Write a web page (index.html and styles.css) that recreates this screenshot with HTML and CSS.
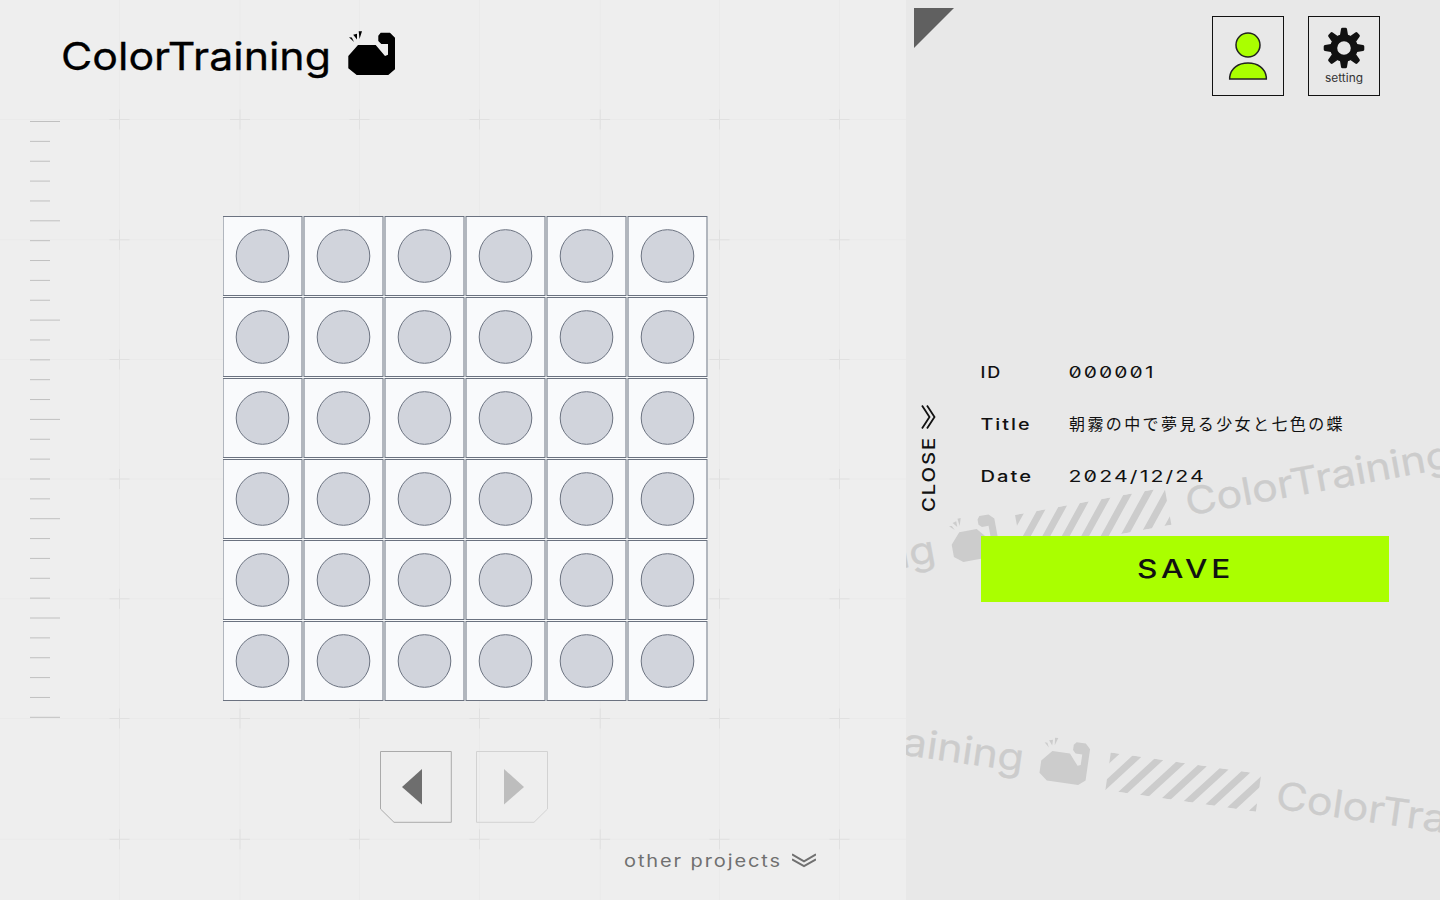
FILE: index.html
```html
<!DOCTYPE html>
<html lang="ja">
<head>
<meta charset="utf-8">
<title>ColorTraining</title>
<link rel="stylesheet" href="styles.css">
</head>
<body>
<svg class="defs" width="0" height="0">
  <defs>
    <g id="logo">
      <text class="logo-text" x="-1" y="0" textLength="270" lengthAdjust="spacingAndGlyphs">ColorTraining</text>
      <g transform="translate(278 -50)">
        <path d="M8.300 36V48.300L16.700 55H48.300L55 49.300V17.700L50 12.700H40.700L38.300 15.700V21L41.300 24H48V34.700L45 36L35.700 25H18Z"/>
        <path d="M9 17.300L14 22L11.800 17.500ZM13.200 14.700L17 19.500V13.700ZM18.700 11.300H22L19.500 19Z"/>
      </g>
    </g>
    <clipPath id="tape-clip"><rect width="152" height="38"/></clipPath>
    <g id="tape" clip-path="url(#tape-clip)">
      <path d="M0 0h9l-31 38h-9zM22 0h9l-31 38h-9zM44 0h9l-31 38h-9zM66 0h9l-31 38h-9zM88 0h9l-31 38h-9zM110 0h9l-31 38h-9zM132 0h9l-31 38h-9zM154 0h9l-31 38h-9zM176 0h9l-31 38h-9z"/>
    </g>
    <g id="ribbon">
      <use href="#logo" x="-525"/>
      <use href="#tape" x="-171" y="-32"/>
      <use href="#logo"/>
    </g>
  </defs>
</svg>
<div class="page">
  <main class="work">
    <svg class="backdrop" id="backdrop" width="906" height="900"></svg>
    <header class="brand">
      <svg width="350" height="64" viewBox="-2 -50 350 64"><use href="#logo"/></svg>
    </header>
    <section class="stage">
      <svg class="board" id="board" width="485" height="485"></svg>
    </section>
    <nav class="pager">
      <svg width="72" height="72"><path class="frame" d="M.5.500H71.300V71.300H14L.5 58Z"/><path class="arrow" d="M22 36L42 18V53.500Z"/></svg>
      <svg class="off" width="72" height="72"><path class="frame" d="M.5.500H71.500V58L58 71.300H.5Z"/><path class="arrow" d="M48 36L28 18V53.500Z"/></svg>
    </nav>
    <footer class="more">
      <svg width="158" height="26"><text class="t more-text" x="0" y="17" textLength="158" lengthAdjust="spacingAndGlyphs">other projects</text></svg>
      <svg class="more-icon" width="24" height="16"><path d="M0 1.300L12 8.300L24 1.300M0 6.300L12 13L24 6.300"/></svg>
    </footer>
  </main>
  <aside class="panel">
    <svg class="ribbons" width="534" height="900">
      <use href="#ribbon" transform="translate(283 515.500) rotate(-10.400)"/>
      <use href="#ribbon" transform="translate(369.500 808.500) rotate(8.200)"/>
    </svg>
    <div class="top">
      <svg class="corner" width="40" height="40"><path d="M0 0H40L0 40Z"/></svg>
      <div class="tools">
        <button class="tool"><svg width="40" height="52"><ellipse cx="20" cy="15" rx="12" ry="12"/><path d="M1.700 49V47C3 38 10.500 33 20 33S37 38 38.300 47V49Z"/></svg></button>
        <button class="tool gear">
          <svg width="42" height="42" viewBox="-21 -21 42 42">
            <defs><path id="tooth" d="M-4-13L-3-19Q-2.800-20.300-1.500-20.300H1.500Q2.800-20.300 3-19L4-13Z"/></defs>
            <circle r="10.300"/>
            <g><use href="#tooth"/><use href="#tooth" transform="rotate(45)"/><use href="#tooth" transform="rotate(90)"/><use href="#tooth" transform="rotate(135)"/><use href="#tooth" transform="rotate(180)"/><use href="#tooth" transform="rotate(225)"/><use href="#tooth" transform="rotate(270)"/><use href="#tooth" transform="rotate(315)"/></g>
          </svg>
          <svg width="42" height="22"><text class="t small" x="2" y="13" textLength="38" lengthAdjust="spacingAndGlyphs">setting</text></svg>
        </button>
      </div>
    </div>
    <div class="body">
      <div class="close">
        <svg width="16" height="24"><path class="close-icon" d="M1 .5L8.500 12L1 23.500M6 .5L13.500 12L6 23.500"/></svg>
        <svg class="close-label" width="24" height="82"><text class="t close-text" transform="translate(14 78) rotate(-90)" textLength="76" lengthAdjust="spacingAndGlyphs">CLOSE</text></svg>
      </div>
      <div class="details">
        <dl class="info">
          <dt><svg width="60" height="24"><text class="t label" x="-.5" y="18" textLength="21.500" lengthAdjust="spacingAndGlyphs">ID</text></svg></dt>
          <dd><svg width="100" height="24"><text class="t" x="-.5" y="18" textLength="87" lengthAdjust="spacingAndGlyphs">000001</text></svg></dd>
          <dt><svg width="60" height="24"><text class="t label" x="-.5" y="18" textLength="51" lengthAdjust="spacingAndGlyphs">Title</text></svg></dt>
          <dd class="jp">朝霧の中で夢見る少女と七色の蝶</dd>
          <dt><svg width="60" height="24"><text class="t label" x="-.5" y="18" textLength="52.500" lengthAdjust="spacingAndGlyphs">Date</text></svg></dt>
          <dd><svg width="150" height="24"><text class="t" x="-.5" y="18" textLength="137.500" lengthAdjust="spacingAndGlyphs">2024/12/24</text></svg></dd>
        </dl>
        <button class="save"><svg width="98" height="34"><text class="t save-text" x="1" y="26" textLength="97" lengthAdjust="spacingAndGlyphs">SAVE</text></svg></button>
      </div>
    </div>
  </aside>
</div>
<script src="script.js"></script>
</body>
</html>
```
FILE: styles.css
```css
* { box-sizing: border-box; }
body { margin: 0; background: #eee; font-family: Inter, "Noto Sans CJK JP", sans-serif; overflow: hidden; }
svg { display: block; flex: none; }
button { margin: 0; padding: 0; font: inherit; }
.defs { position: absolute; }
.page { display: flex; width: 1440px; height: 900px; }
.work { position: relative; width: 906px; display: flex; flex-direction: column; background: #eee; }
.backdrop { position: absolute; left: 0; top: 0; }
.backdrop .line { stroke: #eaeaea; }
.backdrop .cross { stroke: #e0e0e0; }
.backdrop .tick { stroke: #c0c0c0; }
.brand { position: relative; height: 216px; padding: 20px 0 0 60px; }
.logo-text { font: 400 38px Inter, sans-serif; stroke: currentColor; stroke-width: .3; }
.stage { position: relative; padding-left: 223px; height: 535px; }
.board { background: #f9fafb; overflow: hidden; }
.board rect { fill: #f9fafc; stroke: #6b7280; }
.board circle { fill: #d1d4dc; stroke: #6b7280; }
.pager { position: relative; display: flex; gap: 24px; padding-left: 380px; height: 99px; }
.frame { fill: none; stroke: #aaa; }
.arrow { fill: #6e6e6e; }
.off .frame { stroke: #d2d2d2; }
.off .arrow { fill: #bdbdbd; }
.more { position: relative; display: flex; gap: 10px; padding-left: 624px; }
.more-icon { margin-top: 3px; fill: none; stroke: #707070; stroke-width: 2; }
.t { font-family: Inter, sans-serif; font-size: 16px; letter-spacing: 1.6px; font-feature-settings: "zero"; fill: #111; }
.label { font-weight: 500; }
.more-text { fill: #707070; font-size: 17px; }
.small { font-size: 11px; letter-spacing: 0; }
.close-label { overflow: visible; }
.close-text { font-size: 17px; font-weight: 500; }
.save-text { font-size: 25px; letter-spacing: 3px; font-weight: 500; }
.panel { position: relative; width: 534px; background: #e8e8e8; overflow: hidden; }
.ribbons { position: absolute; left: 0; top: 0; fill: #ccc; color: #ccc; }
.top { position: relative; display: flex; justify-content: space-between; padding: 8px 60px 0 8px; height: 364px; }
.corner { fill: #606060; }
.tools { display: flex; gap: 24px; padding-top: 8px; }
.tool { width: 72px; height: 80px; border: 1px solid #111; background: transparent; display: flex; flex-direction: column; align-items: center; justify-content: center; }
.tool svg { fill: #af0; stroke: #222; stroke-width: 1.5; }
.gear { justify-content: flex-start; padding-top: 10px; }
.gear svg { fill: #111; stroke: none; }
.gear circle { fill: none; stroke: #111; stroke-width: 7; }
.gear .small { fill: #333; }
.body { position: relative; display: flex; padding-left: 15px; }
.close { display: flex; flex-direction: column; gap: 5px; width: 60px; padding-top: 41px; }
.close-icon { fill: none; stroke: #111; stroke-width: 1.8; }
.details { width: 408px; }
.info { display: grid; grid-template-columns: 88px 1fr; row-gap: 28px; margin: -4px 0 48px; }
.info dt, .info dd { margin: 0; height: 24px; }
.jp { font-family: "Noto Sans CJK JP", sans-serif; font-size: 16px; line-height: 22px; letter-spacing: 2.4px; color: #111; white-space: nowrap; }
.save { display: flex; align-items: center; justify-content: center; width: 408px; height: 66px; border: 0; background: #af0; }
```
FILE: script.js
```js
const NS = 'http://www.w3.org/2000/svg';
function add(parent, name, attrs) {
  const el = document.createElementNS(NS, name);
  for (const key in attrs) el.setAttribute(key, attrs[key]);
  parent.appendChild(el);
}

const backdrop = document.getElementById('backdrop');
const columns = [119.5, 240, 359.5, 479.5, 600.2, 719.5, 839.5];
const rows = [119.5, 239.8, 359.5, 479, 598.8, 718.5, 839.3];
columns.forEach(x => add(backdrop, 'path', { class: 'line', d: `M${x} 0V900` }));
rows.forEach(y => add(backdrop, 'path', { class: 'line', d: `M0 ${y}H906` }));
columns.forEach(x => rows.forEach(y =>
  add(backdrop, 'path', { class: 'cross', d: `M${x - 10} ${y}h20M${x} ${y - 10}v20` })));
for (let i = 0; i <= 30; i++) {
  add(backdrop, 'path', { class: 'tick', d: `M30 ${121.5 + i * 19.86}h${i % 5 ? 20 : 30}` });
}

const board = document.getElementById('board');
for (let r = 0; r < 6; r++) {
  for (let c = 0; c < 6; c++) {
    add(board, 'rect', { x: c * 81, y: r * 81 + 0.5, width: 79, height: 79 });
    add(board, 'circle', { cx: c * 81 + 39.5, cy: r * 81 + 40, r: 26.3 });
  }
}
```
